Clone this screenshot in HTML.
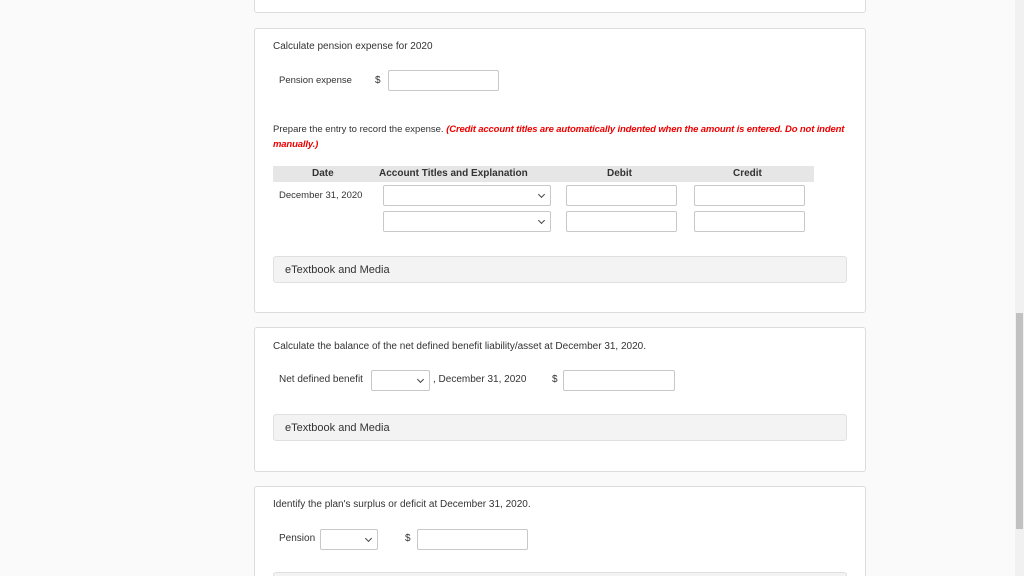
<!DOCTYPE html>
<html style="overflow:hidden;height:576px"><head><style>
*{margin:0;padding:0;box-sizing:border-box}
body{width:1024px;height:576px;overflow:hidden;background:#fafafa;font-family:"Liberation Sans",sans-serif;color:#333;position:relative;font-size:10px}
.card{position:absolute;left:254px;width:612px;background:#fff;border:1px solid #dcdcdc;border-radius:3px}
.t{position:absolute;white-space:nowrap}
.in{position:absolute;height:21px;border:1px solid #c8c8c8;background:#fff;border-radius:2px}
.sel::after{content:"";position:absolute;right:6px;top:6px;width:4px;height:4px;border-right:1.3px solid #444;border-bottom:1.3px solid #444;transform:rotate(45deg)}
.etb{position:absolute;left:18px;width:574px;height:27px;background:#f3f3f3;border:1px solid #e0e0e0;border-radius:3px;font-size:11px;padding:7px 0 0 11px;color:#333}
</style></head><body>
<div class="card" style="top:-5px;height:18px"></div>
<div class="card" style="top:28px;height:285px">
<div class="t" style="left:18px;top:12px">Calculate pension expense for 2020</div>
<div class="t" style="left:24px;top:46px;font-size:9.5px">Pension expense</div>
<div class="t" style="left:120px;top:46px">$</div>
<div class="in" style="left:133px;top:41px;width:111px"></div>
<div class="t" style="left:18px;top:95px;font-size:9.5px">Prepare the entry to record the expense. <span style="color:#e00;font-weight:bold;font-style:italic;letter-spacing:-0.15px">(Credit account titles are automatically indented when the amount is entered. Do not indent</span></div>
<div class="t" style="left:18px;top:110px;color:#e00;font-weight:bold;font-style:italic;font-size:9.5px;letter-spacing:-0.15px">manually.)</div>
<div style="position:absolute;left:18px;top:137px;width:541px;height:16px;background:#e6e6e6"></div>
<div class="t" style="left:57px;top:139px;font-weight:bold">Date</div>
<div class="t" style="left:124px;top:139px;font-weight:bold">Account Titles and Explanation</div>
<div class="t" style="left:352px;top:139px;font-weight:bold">Debit</div>
<div class="t" style="left:478px;top:139px;font-weight:bold">Credit</div>
<div class="t" style="left:24px;top:161px;font-size:9.5px">December 31, 2020</div>
<div class="in sel" style="left:128px;top:156px;width:168px"></div>
<div class="in" style="left:311px;top:156px;width:111px"></div>
<div class="in" style="left:439px;top:156px;width:111px"></div>
<div class="in sel" style="left:128px;top:182px;width:168px"></div>
<div class="in" style="left:311px;top:182px;width:111px"></div>
<div class="in" style="left:439px;top:182px;width:111px"></div>
<div class="etb" style="top:227px">eTextbook and Media</div>
</div>
<div class="card" style="top:327px;height:145px">
<div class="t" style="left:18px;top:13px">Calculate the balance of the net defined benefit liability/asset at December 31, 2020.</div>
<div class="t" style="left:24px;top:46px">Net defined benefit</div>
<div class="in sel" style="left:116px;top:42px;width:59px"></div>
<div class="t" style="left:178px;top:46px">, December 31, 2020</div>
<div class="t" style="left:297px;top:46px">$</div>
<div class="in" style="left:308px;top:42px;width:112px"></div>
<div class="etb" style="top:86px">eTextbook and Media</div>
</div>
<div class="card" style="top:486px;height:95px;overflow:hidden">
<div class="t" style="left:18px;top:12px">Identify the plan's surplus or deficit at December 31, 2020.</div>
<div class="t" style="left:24px;top:46px">Pension</div>
<div class="in sel" style="left:65px;top:42px;width:58px"></div>
<div class="t" style="left:150px;top:46px">$</div>
<div class="in" style="left:162px;top:42px;width:111px"></div>
<div class="etb" style="top:85px"></div>
</div>
<div style="position:absolute;left:1015px;top:0;width:9px;height:576px;background:#f1f1f1"></div>
<div style="position:absolute;left:1016px;top:313px;width:7px;height:216px;background:#c1c1c1"></div>
</body></html>
